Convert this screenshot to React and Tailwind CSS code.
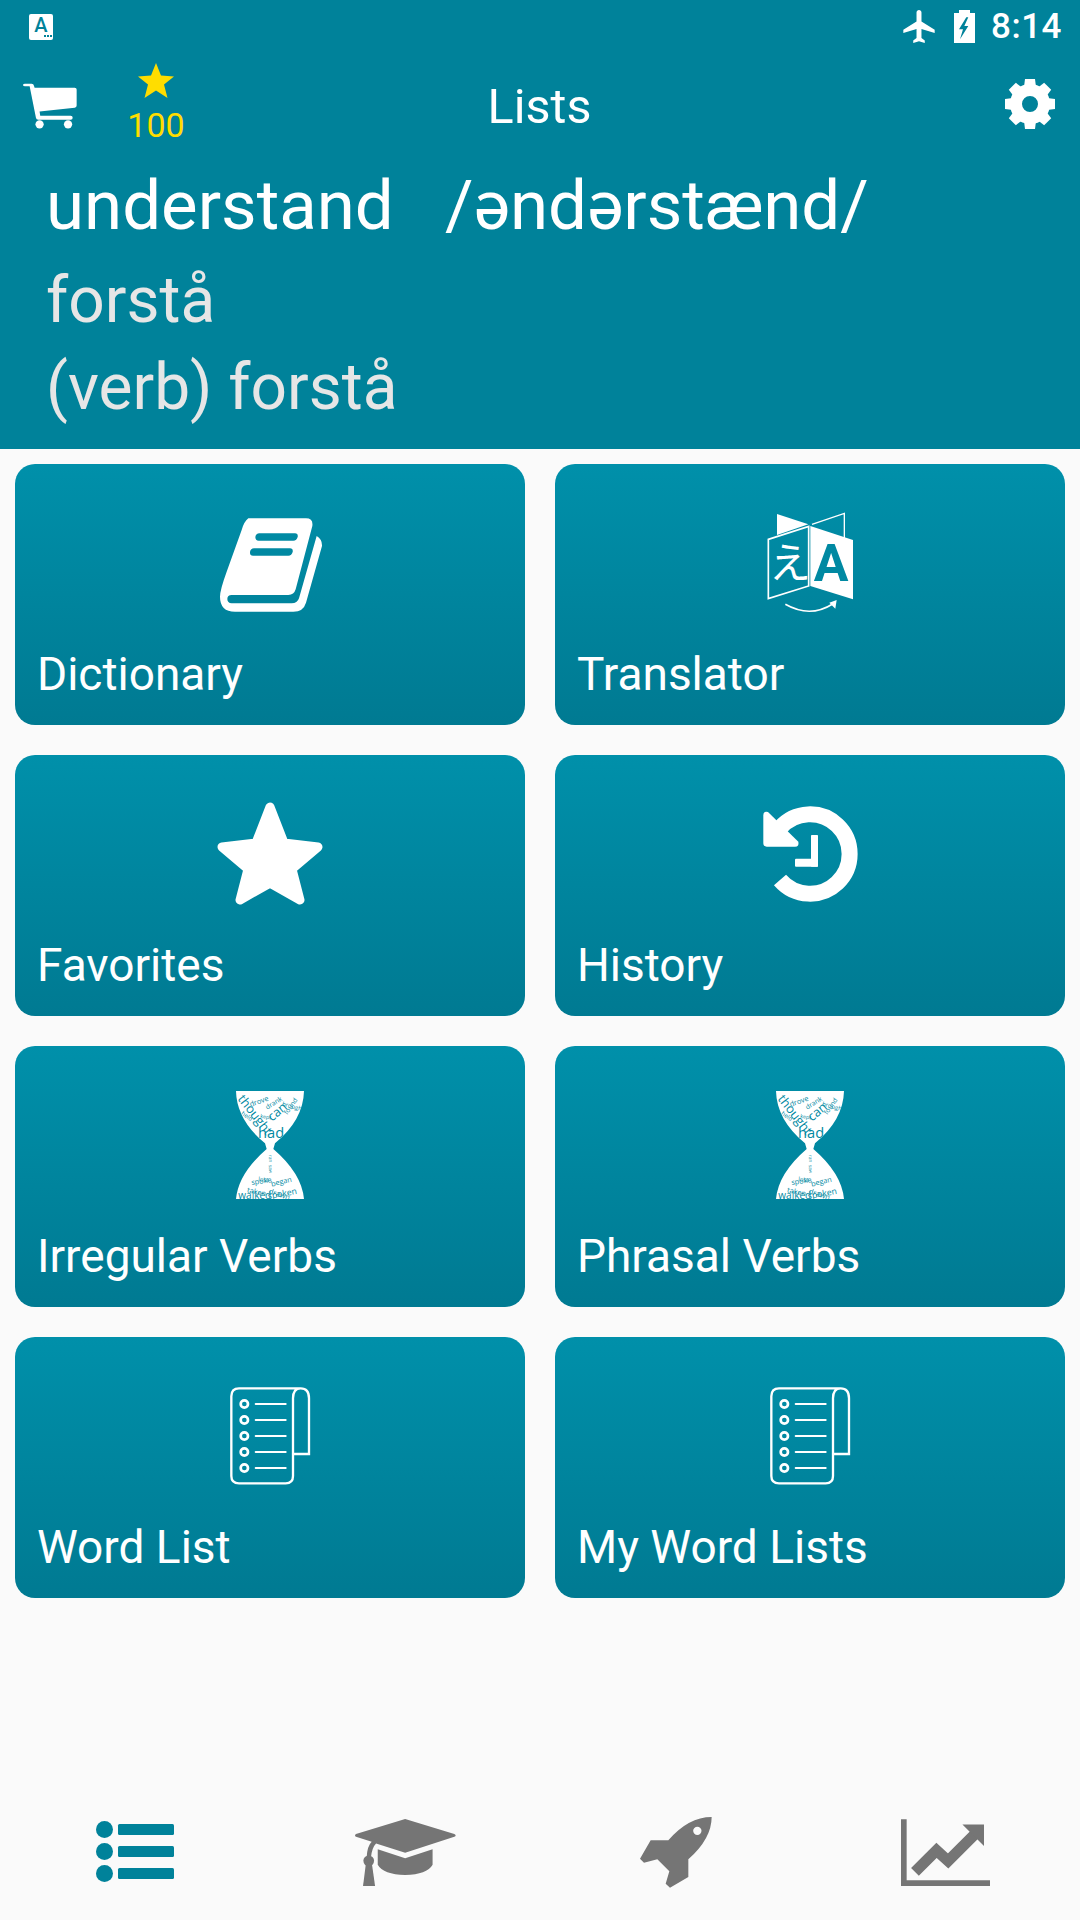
import React from "react"

const CartIcon = () => (
  <svg viewBox="70 245 170 145" className="w-[57px] h-[48px]" fill="#fff">
    <path d="M78 250H98Q104 250 105 256L107 262H228Q234 262 234 268V316Q234 322 228 323L122 334L124 347H216Q222 347 222 353T216 359H118Q112 359 111 353L92 258H78Q72 258 72 254T78 250Z" />
    <circle cx="122" cy="373" r="12.5" />
    <circle cx="208" cy="373" r="12.5" />
  </svg>
)

const GearIcon = () => (
  <svg viewBox="-25 -25 50 50" className="w-[50px] h-[50px]" fill="#fff">
    {[0, 45, 90, 135, 180, 225, 270, 315].map((a) => (
      <path key={a} transform={`rotate(${a})`} d="M-6 -17L-5 -25H5L6 -17Z" />
    ))}
    <circle r="14" fill="none" stroke="#fff" strokeWidth="12" />
  </svg>
)

const BookIcon = () => (
  <svg viewBox="0 -24 540 486" className="w-[180px] h-[162px]" fill="#fff">
    <path
      fillRule="evenodd"
      d="M205 85H378Q400 85 397 108L347 298Q342 315 325 315H155Q142 315 142 327T155 340H335Q352 340 357 325L410 138Q427 148 426 168L378 338Q370 365 340 365H165Q120 365 120 320Q120 300 140 245L185 120Q192 95 205 85ZM238 130Q228 130 226 141Q226 152 236 152H340Q350 152 353 141Q355 130 345 130ZM222 175Q212 175 210 186Q209 197 219 197H325Q335 197 338 186Q340 175 330 175Z"
    />
  </svg>
)

const TranslateIcon = () => (
  <svg viewBox="0 -24 480 486" className="w-[160px] h-[162px]" fill="#fff">
    <polygon points="141,72 235,103 141,135" />
    <path d="M246 103L343 70V152" fill="none" stroke="#fff" strokeWidth="4" />
    <polygon points="115,148 236,109 236,288 115,326" fill="none" stroke="#fff" strokeWidth="5" />
    <path d="M241 108L369 150V328L241 288Z" />
    <text x="303" y="272" textAnchor="middle" fontSize="155" fontWeight="700" fontFamily="Roboto, sans-serif" fill="#0089a2">
      A
    </text>
    <text x="180" y="265" textAnchor="middle" fontSize="125" fontFamily="'Noto Sans CJK JP', sans-serif" fill="#fff">
      え
    </text>
    <path d="M166 343Q240 385 308 342" fill="none" stroke="#fff" strokeWidth="5" />
    <polygon points="320,330 316,356 298,338" />
  </svg>
)

const StarIcon = () => (
  <svg viewBox="0 0 162 162" className="w-[162px] h-[162px]" fill="#fff">
    <polygon
      points="81,34 95,70 129,74 103,96 111,127 81,110 51,127 59,96 33,74 67,70"
      stroke="#fff"
      strokeWidth="9"
      strokeLinejoin="round"
    />
  </svg>
)

const HistoryIcon = () => (
  <svg viewBox="0 -51 480 486" className="w-[160px] h-[162px]" fill="#fff">
    <path d="M150 270A119 119 0 1 0 150 114" fill="none" stroke="#fff" strokeWidth="48" />
    <path d="M100 76Q100 62 114 66L205 155Q208 170 195 170H110Q100 170 100 160Z" />
    <rect x="243" y="135" width="21" height="95" rx="2" />
    <rect x="195" y="206" width="69" height="24" rx="3" />
  </svg>
)

const HourglassIcon = ({ id }) => (
  <svg viewBox="0 -33 360 486" className="w-[120px] h-[162px]">
    <defs>
      <clipPath id={id}>
        <path d="M78 48H282Q280 135 195 205L190 222Q275 295 282 372H78Q85 295 170 222L165 205Q80 135 78 48Z" />
      </clipPath>
    </defs>
    <path fill="#fff" d="M78 48H282Q280 135 195 205L190 222Q275 295 282 372H78Q85 295 170 222L165 205Q80 135 78 48Z" />
    <g clipPath={`url(#${id})`} fill="#0089a2" fontFamily="'Open Sans', sans-serif">
      <text x="82" y="72" fontSize="38" transform="rotate(52 82 72)">thought</text>
      <text x="122" y="96" fontSize="22" transform="rotate(-20 122 96)">drove</text>
      <text x="172" y="104" fontSize="20" transform="rotate(-32 172 104)">drank</text>
      <text x="186" y="140" fontSize="38" transform="rotate(-40 186 140)">can</text>
      <text x="232" y="120" fontSize="20" transform="rotate(-55 232 120)">found</text>
      <text x="215" y="92" fontSize="18" transform="rotate(15 215 92)">brought</text>
      <text x="144" y="190" fontSize="44">had</text>
      <text x="92" y="118" fontSize="18" transform="rotate(35 92 118)">held</text>
      <text x="150" y="128" fontSize="16" transform="rotate(10 150 128)">kept</text>
      <text x="85" y="372" fontSize="30">walked</text>
      <text x="175" y="372" fontSize="26" transform="rotate(-10 175 372)">spoken</text>
      <text x="125" y="330" fontSize="22" transform="rotate(-8 125 330)">spoke</text>
      <text x="185" y="335" fontSize="22" transform="rotate(-14 185 335)">began</text>
      <text x="110" y="352" fontSize="22" transform="rotate(12 110 352)">taken</text>
      <text x="175" y="355" fontSize="22" transform="rotate(18 175 355)">drawn</text>
      <text x="145" y="318" fontSize="18" transform="rotate(5 145 318)">lost</text>
      <text x="176" y="240" fontSize="14" transform="rotate(85 176 240)">ran</text>
      <text x="176" y="270" fontSize="14" transform="rotate(85 176 270)">saw</text>
    </g>
  </svg>
)

const ListDocIcon = () => (
  <svg viewBox="0 -60 360 486" className="w-[120px] h-[162px]" fill="none" stroke="#fff">
    <path strokeWidth="7" d="M272 40H87Q64 40 64 64V303Q64 325 87 325H227Q249 325 249 303V70Q249 40 272 40Q297 40 297 70V237H249" />
    {[87, 135, 183, 231, 279].map((y) => (
      <g key={y}>
        <circle cx="103" cy={y} r="11" strokeWidth="8" />
        <line x1="137" x2="227" y1={y} y2={y} strokeWidth="6" strokeLinecap="round" />
      </g>
    ))}
  </svg>
)

const ListNavIcon = () => (
  <svg viewBox="0 0 78 61" className="w-[78px] h-[61px] mb-[2px]" fill="#00829a">
    {[0, 22, 44].map((y) => (
      <g key={y}>
        <circle cx="8.5" cy={y + 8.5} r="8.5" />
        <rect x="22" y={y + 3} width="56" height="11" rx="1.5" />
      </g>
    ))}
  </svg>
)

const CapIcon = () => (
  <svg viewBox="885 85 302 200" className="w-[101px] h-[67px]" fill="#757575">
    <path d="M1035 85L1182 130Q1190 134 1182 138L1035 186L948 158Q936 170 933 198H920Q922 165 935 153L888 138Q882 134 888 130Z" />
    <circle cx="926" cy="210" r="16" />
    <polygon points="918,215 935,215 945,285 909,285" />
    <path d="M953 175L1035 202L1117 175V222Q1100 252 1035 252Q970 252 953 222Z" />
  </svg>
)

const RocketIcon = () => (
  <svg viewBox="60 85 216 213" className="w-[72px] h-[71px] ml-[2px]" fill="#757575">
    <path
      fillRule="evenodd"
      d="M275 85Q275 150 205 212V265L150 297L137 285L148 248L112 212L72 222L60 210L92 155H145Q205 85 275 85ZM232 114A12.500 12.500 0 1 0 232 139A12.500 12.500 0 1 0 232 114Z"
    />
  </svg>
)

const ChartIcon = () => (
  <svg viewBox="843 84 268 201" className="w-[89px] h-[67px]" fill="#757575">
    <path d="M843 84H860V268H1111V285H843Z" />
    <path d="M885 243L950 178L985 210L1065 130" fill="none" stroke="#757575" strokeWidth="33" />
    <polygon points="1028,100 1093,100 1093,165" />
  </svg>
)

const tiles = [
  { label: "Dictionary", icon: <BookIcon /> },
  { label: "Translator", icon: <TranslateIcon /> },
  { label: "Favorites", icon: <StarIcon /> },
  { label: "History", icon: <HistoryIcon /> },
  { label: "Irregular Verbs", icon: <HourglassIcon id="hourglass-a" /> },
  { label: "Phrasal Verbs", icon: <HourglassIcon id="hourglass-b" /> },
  { label: "Word List", icon: <ListDocIcon /> },
  { label: "My Word Lists", icon: <ListDocIcon /> },
]

export default function App() {
  return (
    <div className="w-[1080px] h-[1920px] flex flex-col bg-[#fafafa] font-['Roboto',sans-serif] overflow-hidden">
      {/* Header */}
      <div className="h-[449px] shrink-0 bg-[#00829a] text-white">
        {/* Status bar */}
        <div className="h-[54px] pl-[29px] pr-[18px] flex items-start justify-between pt-[10px]">
          <div className="mt-[4px] w-[24px] h-[26px] rounded-[2px] bg-white flex flex-col items-center">
            <span className="text-[#00829a] text-[20px] leading-[19px] mt-[2px] font-medium">A</span>
            <div className="self-end flex gap-[1px] mr-[1px]">
              <span className="w-[2px] h-[2px] bg-[#00829a]"></span>
              <span className="w-[2px] h-[2px] bg-[#00829a]"></span>
              <span className="w-[2px] h-[2px] bg-[#00829a]"></span>
            </div>
          </div>
          <div className="flex items-start">
            <svg viewBox="2 2 19 20" className="w-[32px] h-[33px]" fill="#fff">
              <path d="M21 16v-2l-8-5V3.500c0-.830-.670-1.500-1.500-1.500S10 2.670 10 3.500V9l-8 5v2l8-2.500V19l-2 1.500V22l3.500-1 3.500 1v-1.500L13 19v-5.500l8 2.500z" />
            </svg>
            <svg viewBox="0 0 21 33" className="w-[21px] h-[33px] ml-[19px]">
              <path fill="#fff" d="M5 0H16V3H21V33H0V3H5Z" />
              <polygon fill="#00829a" points="12.300,7.300 5,19.300 9,19.300 6,29.300 14.300,16 10.300,16 14.300,7.300" />
            </svg>
            <span className="ml-[16px] text-[35px] leading-[33px] font-medium tracking-[0.5px]">8:14</span>
          </div>
        </div>
        {/* Toolbar */}
        <div className="h-[84px] pl-[22px] pr-[25px] grid grid-cols-[1fr_auto_1fr] items-start">
          <div className="flex items-start">
            <div className="mt-[28px]">
              <CartIcon />
            </div>
            <div className="ml-[48px] w-[58px] flex flex-col items-center mt-[9px]">
              <svg viewBox="0 0 36 35" className="w-[36px] h-[35px]" fill="#ffdd00">
                <polygon points="18,0 23,12.500 36,13.500 26,21.500 29.500,35 18,27.500 6.500,35 10,21.500 0,13.500 13,12.500" />
              </svg>
              <span className="text-[34px] leading-[38px] text-[#ffdd00] mt-[8px]">100</span>
            </div>
          </div>
          <span className="text-[48.500px] leading-[56px] mt-[25px] ml-[2px]">Lists</span>
          <div className="flex justify-end mt-[25px]">
            <GearIcon />
          </div>
        </div>
        {/* Word */}
        <div className="pl-[46px] pt-[16px]">
          <p className="text-[69px] leading-[104px] whitespace-pre">understand   /əndərstænd/</p>
          <p className="text-[64px] leading-[86px] text-[#e6e6e6]">forstå</p>
          <p className="text-[64px] leading-[88px] text-[#e6e6e6]">(verb) forstå</p>
        </div>
      </div>

      {/* Tiles */}
      <div className="grid grid-cols-2 gap-[30px] px-[15px] pt-[15px]">
        {tiles.map((tile) => (
          <div
            key={tile.label}
            className="h-[261px] rounded-[20px] bg-linear-to-b from-[#0090aa] to-[#007a92] text-white"
          >
            <div className="h-[180px] pt-[18px] flex justify-center">{tile.icon}</div>
            <p className="pl-[22px] text-[46px] leading-[60px]">{tile.label}</p>
          </div>
        ))}
      </div>

      {/* Bottom nav */}
      <div className="mt-auto h-[136px] grid grid-cols-4 place-items-center">
        <ListNavIcon />
        <CapIcon />
        <RocketIcon />
        <ChartIcon />
      </div>
    </div>
  )
}
